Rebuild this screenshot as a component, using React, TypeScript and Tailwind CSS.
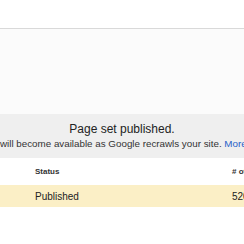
export default function App() {
  return (
    <div className="w-[244px] h-[244px] overflow-hidden bg-white font-['Liberation_Sans',Arial,sans-serif]">
      <div className="h-[29px] bg-white border-b border-[#d9d9d9]" />
      <div className="h-[85px] bg-[#fbfbfb]" />

      <div className="h-[44px] bg-[#efefef] flex flex-col items-center pt-[8px]">
        <div className="text-[12px] leading-[15px] text-[#222]">Page set published.</div>
        <div className="w-full flex justify-start mt-[1px]">
          <span className="whitespace-nowrap text-[9.8px] leading-[12px] text-[#333]">
            will become available as Google recrawls your site.{" "}
            <span className="text-[#2a62c9]">More info</span>
          </span>
        </div>
      </div>

      <div className="grid grid-cols-[232px_1fr] h-[27px] items-center">
        <div className="pl-[35px] text-[8px] font-bold text-[#333] whitespace-nowrap">Status</div>
        <div className="text-[8px] font-bold text-[#333] whitespace-nowrap"># of pages</div>
      </div>

      <div className="grid grid-cols-[232px_1fr] h-[22px] items-center bg-[#fbefc6]">
        <div className="pl-[35px] text-[10px] text-[#222] whitespace-nowrap">Published</div>
        <div className="text-[10px] text-[#222] whitespace-nowrap">520</div>
      </div>
    </div>
  );
}
